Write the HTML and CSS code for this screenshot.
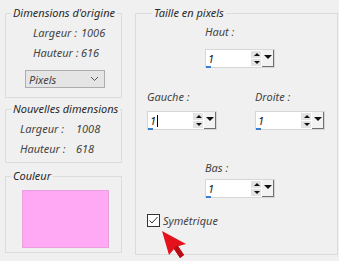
FILE: index.html
```html
<!DOCTYPE html>
<html lang="fr">
<head>
    <meta charset="UTF-8">
    <title>Taille en pixels</title>
    <link rel="stylesheet" href="styles.css">
</head>
<body>
    <div class="dialog">
        <div class="left">
            <fieldset class="group group-orig">
                <legend>Dimensions d'origine</legend>
                <div class="rows rows-orig">
                    <span>Largeur :</span><span>1006</span>
                    <span>Hauteur :</span><span>616</span>
                </div>
                <div class="select">
                    <span>Pixels</span>
                    <svg width="9" height="6" viewBox="0 0 9 6"><path d="M1 1 L4.5 4.5 L8 1" fill="none" stroke="#555" stroke-width="1"/></svg>
                </div>
            </fieldset>

            <fieldset class="group group-new">
                <legend>Nouvelles dimensions</legend>
                <div class="rows rows-new">
                    <span>Largeur :</span><span>1008</span>
                    <span>Hauteur :</span><span>618</span>
                </div>
            </fieldset>

            <fieldset class="group group-color">
                <legend>Couleur</legend>
                <div class="swatch"></div>
            </fieldset>
        </div>

        <fieldset class="group group-size">
            <legend>Taille en pixels</legend>

            <div class="field field-top">
                <div class="field-label">Haut :</div>
                <div class="spin">
                    <div class="spin-input">1</div>
                    <div class="spin-arrows"><span class="up"></span><span class="down"></span></div>
                    <div class="spin-drop"><span></span></div>
                </div>
                <div class="dash"></div>
            </div>

            <div class="side-row">
                <div class="field">
                    <div class="field-label">Gauche :</div>
                    <div class="spin">
                        <div class="spin-input">1<i class="caret"></i></div>
                        <div class="spin-arrows"><span class="up"></span><span class="down"></span></div>
                        <div class="spin-drop"><span></span></div>
                    </div>
                    <div class="dash"></div>
                </div>
                <div class="field">
                    <div class="field-label">Droite :</div>
                    <div class="spin">
                        <div class="spin-input">1</div>
                        <div class="spin-arrows"><span class="up"></span><span class="down"></span></div>
                        <div class="spin-drop"><span></span></div>
                    </div>
                    <div class="dash"></div>
                </div>
            </div>

            <div class="field field-bottom">
                <div class="field-label">Bas :</div>
                <div class="spin">
                    <div class="spin-input">1</div>
                    <div class="spin-arrows"><span class="up"></span><span class="down"></span></div>
                    <div class="spin-drop"><span></span></div>
                </div>
                <div class="dash"></div>
            </div>

            <label class="check">
                <svg width="13" height="13" viewBox="0 0 13 13">
                    <rect x="0.5" y="0.5" width="12" height="12" fill="#fff" stroke="#333"/>
                    <path d="M2.5 6.5 L5 9 L10.5 3" fill="none" stroke="#333" stroke-width="1"/>
                </svg>
                <span>Symétrique</span>
            </label>

            <svg class="pointer" width="26" height="28" viewBox="0 0 26 28">
                <path d="M0 0 L24 13 L16 15 L22 24 L18 27 L12 18 L7 24 Z" fill="#e3121c"/>
                <path d="M24 13 L16 15 L22 24 L18 27 L12 18 L14 15 Z" fill="#b80d16"/>
            </svg>
        </fieldset>
    </div>
</body>
</html>
```

FILE: styles.css
```css
:root {
    --bg: #f0f0f0;
    --frame: #dcdcdc;
    --text: #444;
    --pink: #ffa8f3;
}

body {
    margin: 0;
    width: 339px;
    height: 261px;
    overflow: hidden;
    background-color: var(--bg);
    font-family: 'Noto Sans', 'Open Sans', sans-serif;
    font-style: italic;
    font-size: 11px;
    color: var(--text);
}

.dialog {
    display: flex;
    gap: 13px;
    padding: 6px 1px 0 5px;
}

.left {
    display: flex;
    flex-direction: column;
    width: 117px;
}

.group {
    box-sizing: border-box;
    margin: 0;
    padding: 0;
    border: 1px solid var(--frame);
    min-inline-size: 0;
}

.group legend {
    margin-left: 5px;
    padding: 0 2px;
    line-height: 14px;
    color: #2a2a2a;
}

.group-orig {
    height: 92px;
}

.group-new {
    height: 61px;
    margin-top: 4px;
}

.group-color {
    height: 84px;
    margin-top: 6px;
}

.rows {
    display: grid;
    grid-auto-rows: 20px;
    align-items: center;
    margin-top: 2px;
}

.rows-orig {
    grid-template-columns: 48px auto;
    padding-left: 27px;
}

.rows-new {
    grid-template-columns: 56px auto;
    padding-left: 14px;
}

.select {
    box-sizing: border-box;
    display: flex;
    align-items: center;
    justify-content: space-between;
    width: 80px;
    height: 18px;
    margin: 8px 0 0 19px;
    padding: 0 5px 0 3px;
    background-color: #e5e5e5;
    border: 1px solid #adadad;
}

.swatch {
    box-sizing: border-box;
    width: 87px;
    height: 58px;
    margin: 7px 0 0 16px;
    background-color: var(--pink);
    border: 1px solid #e9a0dc;
}

.group-size {
    position: relative;
    width: 203px;
    height: 249px;
    padding-left: 11px;
}

.field-label {
    line-height: 14px;
}

.field-top {
    margin: 5px 0 0 58px;
}

.field-top .field-label {
    margin-bottom: 10px;
}

.side-row {
    display: flex;
    gap: 38px;
    margin-top: 22px;
}

.side-row .field-label {
    margin-bottom: 7px;
}

.field-bottom {
    margin: 31px 0 0 58px;
}

.field-bottom .field-label {
    margin-bottom: 4px;
}

.spin {
    box-sizing: border-box;
    display: flex;
    width: 70px;
    height: 19px;
    background-color: #fff;
    border: 1px solid #d6d6d6;
}

.spin-input {
    width: 45px;
    padding-left: 2px;
    line-height: 17px;
    color: #222;
}

.caret {
    display: inline-block;
    width: 1px;
    height: 12px;
    margin-left: 1px;
    vertical-align: -2px;
    background-color: #000;
}

.spin-arrows {
    display: flex;
    flex-direction: column;
    justify-content: center;
    gap: 1px;
    width: 11px;
}

.spin-arrows span {
    position: relative;
    height: 7px;
    background-color: #e3e3e3;
}

.spin-arrows .up::after,
.spin-arrows .down::after {
    content: '';
    position: absolute;
    left: 3px;
    border-left: 3px solid transparent;
    border-right: 3px solid transparent;
}

.spin-arrows .up::after {
    top: 2px;
    border-bottom: 3px solid #111;
}

.spin-arrows .down::after {
    top: 2px;
    border-top: 3px solid #111;
}

.spin-drop {
    display: flex;
    justify-content: center;
    width: 11px;
    margin-left: 1px;
    background-color: #f2f2f2;
    border-right: 1px solid #707070;
    border-bottom: 1px solid #707070;
}

.spin-drop span {
    margin-top: 5px;
    width: 0;
    height: 0;
    border-left: 4px solid transparent;
    border-right: 4px solid transparent;
    border-top: 4px solid #111;
}

.dash {
    width: 5px;
    height: 2px;
    margin: -2px 0 0 1px;
    background-color: #3a7fce;
}

.check {
    display: flex;
    align-items: center;
    gap: 3px;
    margin-top: 15px;
}

.pointer {
    position: absolute;
    left: 26px;
    top: 211px;
}
```
